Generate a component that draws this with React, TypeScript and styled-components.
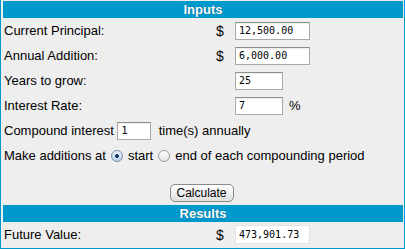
import styled, { createGlobalStyle } from 'styled-components';

const GlobalStyle = createGlobalStyle`
  body {
    margin: 0;
    background: #fff;
    font-family: "Liberation Sans", Arial, sans-serif;
    font-size: 13px;
    color: #000;
  }
`;

const Panel = styled.div`
  width: 400px;
  background: #eeeeee;
  border: 1px solid #0099cc;
  border-top: none;
  padding: 1px 1px 1px 2px;
  display: flex;
  flex-direction: column;
`;

const SectionHeader = styled.div`
  height: 17px;
  background: #0099cc;
  color: #fff;
  font-weight: bold;
  font-size: 13px;
  line-height: 17px;
  text-align: center;
  text-shadow: 0 0 1px rgba(0, 40, 70, 0.7);
`;

const Row = styled.div`
  height: 25px;
  display: grid;
  grid-template-columns: 210px 21px auto;
  align-items: center;
  padding-left: 1px;
`;

const FlowRow = styled.div`
  height: 25px;
  display: flex;
  align-items: center;
  padding-left: 1px;
  white-space: nowrap;
`;

const Dollar = styled.span`
  font-size: 14px;
  padding-left: 2px;
`;

const Field = styled.div`
  display: flex;
  align-items: center;
  gap: 6px;
`;

const TextBox = styled.input<{ $w: number }>`
  box-sizing: border-box;
  width: ${(p) => p.$w}px;
  height: 18px;
  padding: 0 3px;
  margin: 0;
  border: 1px solid #a9a9a9;
  border-top-color: #8e8e8e;
  box-shadow: inset 0 1px 1px rgba(0, 0, 0, 0.08);
  background: #fff;
  font-family: "DejaVu Sans Mono", "Liberation Mono", monospace;
  font-size: 10px;
  color: #000;
  outline: none;
`;

const ResultBox = styled(TextBox)`
  height: 19px;
  border: 1px solid #e2e2e2;
  box-shadow: none;
`;

const Radio = styled.input`
  appearance: none;
  box-sizing: border-box;
  width: 12px;
  height: 12px;
  margin: 0 5px 0 5px;
  border-radius: 50%;
  border: 1px solid #9a9a9a;
  background: linear-gradient(#ffffff, #e4e4e4);
  position: relative;

  &:checked {
    border-color: #7d8fa8;
    background: radial-gradient(circle, #1a3a6a 0 1.6px, transparent 2.2px),
      linear-gradient(#e6f0fb, #b9cfe8);
  }
`;

const ButtonRow = styled.div`
  height: 25px;
  display: flex;
  align-items: center;
  justify-content: center;
  margin-top: 12px;
`;

const Button = styled.button`
  height: 18px;
  width: 64px;
  padding: 0;
  margin-right: 3px;
  border: 1px solid #8a8a8a;
  border-radius: 5px;
  background: linear-gradient(#ffffff, #f0f0f0 50%, #dedede);
  font-family: "Liberation Sans", Arial, sans-serif;
  font-size: 12px;
  color: #000;
`;

export default function App() {
  return (
    <>
      <GlobalStyle />
      <Panel>
        <SectionHeader>Inputs</SectionHeader>
        <Row>
          <span>Current Principal:</span>
          <Dollar>$</Dollar>
          <TextBox $w={75} defaultValue="12,500.00" />
        </Row>
        <Row>
          <span>Annual Addition:</span>
          <Dollar>$</Dollar>
          <TextBox $w={75} defaultValue="6,000.00" />
        </Row>
        <Row>
          <span>Years to grow:</span>
          <span />
          <TextBox $w={48} defaultValue="25" />
        </Row>
        <Row>
          <span>Interest Rate:</span>
          <span />
          <Field>
            <TextBox $w={48} defaultValue="7" />
            <span>%</span>
          </Field>
        </Row>
        <FlowRow>
          <span>Compound interest&nbsp;</span>
          <TextBox $w={34} defaultValue="1" />
          <span>&nbsp;&nbsp;time(s) annually</span>
        </FlowRow>
        <FlowRow>
          <span>Make additions at</span>
          <Radio type="radio" name="when" defaultChecked />
          <span>start</span>
          <Radio type="radio" name="when" />
          <span>end of each compounding period</span>
        </FlowRow>
        <ButtonRow>
          <Button type="button">Calculate</Button>
        </ButtonRow>
        <SectionHeader>Results</SectionHeader>
        <Row>
          <span>Future Value:</span>
          <Dollar>$</Dollar>
          <ResultBox $w={75} readOnly value="473,901.73" />
        </Row>
      </Panel>
    </>
  );
}
